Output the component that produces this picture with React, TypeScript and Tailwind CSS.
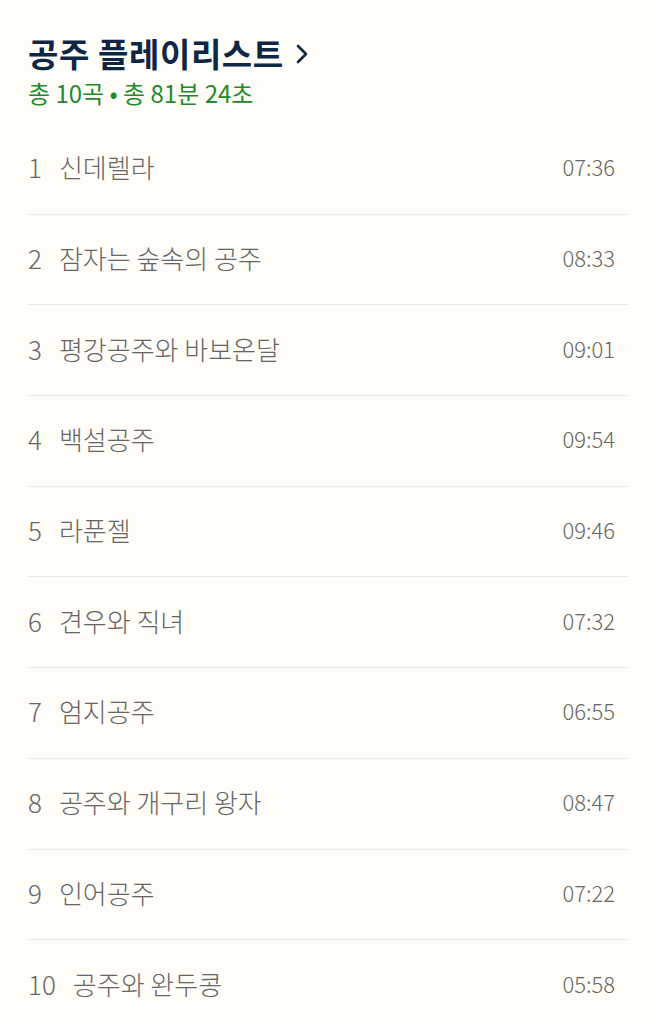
import React from "react";

const tracks = [
  ["신데렐라", "07:36"],
  ["잠자는 숲속의 공주", "08:33"],
  ["평강공주와 바보온달", "09:01"],
  ["백설공주", "09:54"],
  ["라푼젤", "09:46"],
  ["견우와 직녀", "07:32"],
  ["엄지공주", "06:55"],
  ["공주와 개구리 왕자", "08:47"],
  ["인어공주", "07:22"],
  ["공주와 완두콩", "05:58"],
];

export default function App() {
  return (
    <div
      className="min-h-[1024px] w-[656px] bg-[#fffdf8] px-[28px] pt-[34px]"
      style={{ fontFamily: '"Noto Sans CJK KR", "Noto Sans", sans-serif' }}
    >
      <div className="flex h-[38px] items-center gap-[11px]">
        <h1 className="text-[33px] font-bold leading-[38px] tracking-[0.6px] text-[#0f2645]">공주 플레이리스트</h1>
        <svg width="14" height="22" viewBox="0 0 14 22" className="mt-[2px]">
          <path d="M3 3 L11 11 L3 19" fill="none" stroke="#0f2645" strokeWidth="2.6" strokeLinecap="round" strokeLinejoin="round" />
        </svg>
      </div>
      <div className="mt-[3px] text-[24px] leading-[36px] text-[#1f8a2e]">총 10곡 • 총 81분 24초</div>
      <div className="mt-[13px] w-[600px]">
        {tracks.map(([title, dur], i) => (
          <div
            key={i}
            className={`flex h-[90.7px] items-center pb-[4px] pr-[13px] ${i < tracks.length - 1 ? "border-b border-[#eceae6]" : ""}`}
          >
            <span className="text-[26px] font-light text-[#666666]">{i + 1}</span>
            <span className="ml-[17px] flex-1 text-[26px] font-light text-[#666666]">{title}</span>
            <span className="text-[22px] font-light text-[#666666]">{dur}</span>
          </div>
        ))}
      </div>
    </div>
  );
}
